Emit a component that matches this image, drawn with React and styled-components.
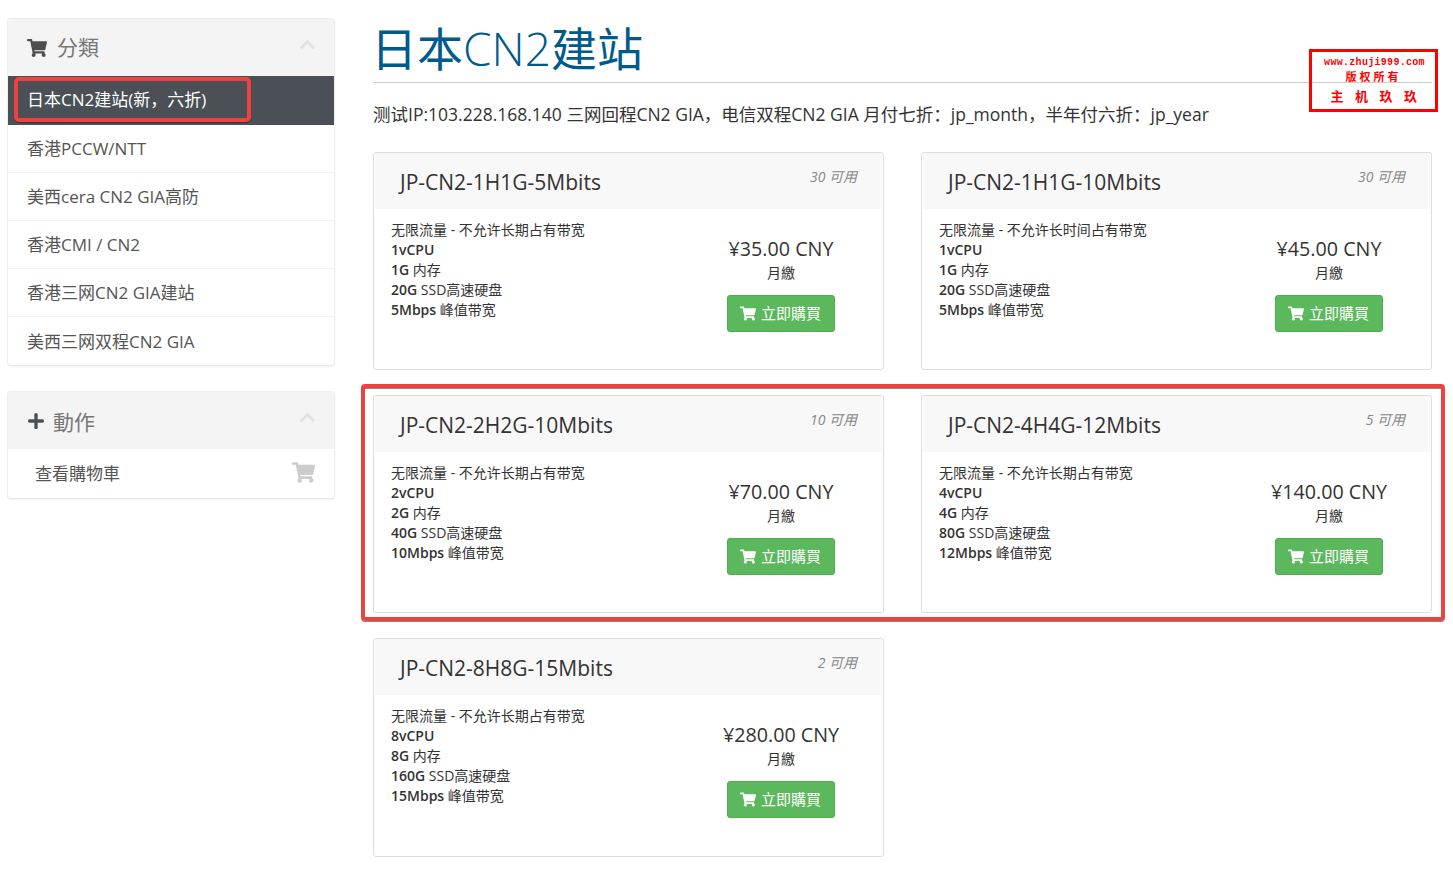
import React from "react";
import styled, { createGlobalStyle } from "styled-components";
import { FaPlus, FaChevronUp, FaShoppingCart } from "react-icons/fa";

const SANS = `"Open Sans", "Noto Sans CJK SC", sans-serif`;

const products = [
  { name: "JP-CN2-1H1G-5Mbits", qty: "30 可用", desc: "无限流量 - 不允许长期占有带宽", cpu: "1vCPU", ram: "1G", disk: "20G", band: "5Mbps", price: "¥35.00 CNY" },
  { name: "JP-CN2-1H1G-10Mbits", qty: "30 可用", desc: "无限流量 - 不允许长时间占有带宽", cpu: "1vCPU", ram: "1G", disk: "20G", band: "5Mbps", price: "¥45.00 CNY" },
  { name: "JP-CN2-2H2G-10Mbits", qty: "10 可用", desc: "无限流量 - 不允许长期占有带宽", cpu: "2vCPU", ram: "2G", disk: "40G", band: "10Mbps", price: "¥70.00 CNY" },
  { name: "JP-CN2-4H4G-12Mbits", qty: "5 可用", desc: "无限流量 - 不允许长期占有带宽", cpu: "4vCPU", ram: "4G", disk: "80G", band: "12Mbps", price: "¥140.00 CNY" },
  { name: "JP-CN2-8H8G-15Mbits", qty: "2 可用", desc: "无限流量 - 不允许长期占有带宽", cpu: "8vCPU", ram: "8G", disk: "160G", band: "15Mbps", price: "¥280.00 CNY" },
];

const categories = ["香港PCCW/NTT", "美西cera CN2 GIA高防", "香港CMI / CN2", "香港三网CN2 GIA建站", "美西三网双程CN2 GIA"];

function App() {
  return (
    <Page>
      <GlobalStyle />
      <Sidebar>
        <Panel>
          <PanelHead>
            <HeadIcon $size={20} $gap={10}><FaShoppingCart /></HeadIcon>
            <HeadTitle $lift={4}>分類</HeadTitle>
            <Collapse><FaChevronUp /></Collapse>
          </PanelHead>
          <ActiveItem>
            日本CN2建站(新，六折)
            <ActiveMark />
          </ActiveItem>
          {categories.map((c) => (
            <MenuItem key={c}>{c}</MenuItem>
          ))}
        </Panel>
        <Panel>
          <PanelHead>
            <HeadIcon $size={18} $gap={8}><FaPlus /></HeadIcon>
            <HeadTitle>動作</HeadTitle>
            <Collapse><FaChevronUp /></Collapse>
          </PanelHead>
          <ActionItem>
            查看購物車
            <ActionIcon><FaShoppingCart /></ActionIcon>
          </ActionItem>
        </Panel>
      </Sidebar>
      <Main>
        <Title>日本<TitleLatin>CN2</TitleLatin>建站</Title>
        <Stamp>
          <StampUrl>www.zhuji999.com</StampUrl>
          <StampLine>版权所有</StampLine>
          <StampName>主机玖玖</StampName>
        </Stamp>
        <Intro>测试IP:103.228.168.140 三网回程CN2 GIA，电信双程CN2 GIA 月付七折：jp_month，半年付六折：jp_year</Intro>
        <Cards>
          <RowMark />
          {products.map((p) => (
            <Card key={p.name}>
              <CardHead>
                <CardName>{p.name}</CardName>
                <Qty>{p.qty}</Qty>
              </CardHead>
              <CardBody>
                <Specs>
                  <div>{p.desc}</div>
                  <div><b>{p.cpu}</b></div>
                  <div><b>{p.ram}</b> 内存</div>
                  <div><b>{p.disk}</b> SSD高速硬盘</div>
                  <div><b>{p.band}</b> 峰值带宽</div>
                </Specs>
                <Pricing>
                  <Price>{p.price}</Price>
                  <Cycle>月繳</Cycle>
                  <BuyButton><FaShoppingCart />立即購買</BuyButton>
                </Pricing>
              </CardBody>
            </Card>
          ))}
        </Cards>
      </Main>
    </Page>
  );
}

const GlobalStyle = createGlobalStyle`
  html, body {
    margin: 0;
    background: #fff;
    font-family: ${SANS};
    color: #333;
  }
  * {
    box-sizing: border-box;
  }
`;

const Page = styled.div`
  display: flex;
  align-items: flex-start;
  gap: 38px;
  width: 1453px;
  height: 871px;
  overflow: hidden;
  padding: 18px 21px 0 7px;
`;

const Sidebar = styled.div`
  flex: 0 0 328px;
  display: flex;
  flex-direction: column;
  gap: 25px;
`;

const Panel = styled.div`
  border: 1px solid #eee;
  border-bottom-color: #e8e8e8;
  border-radius: 4px;
  background: #fff;
  box-shadow: 0 1px 2px rgba(0, 0, 0, 0.06);
`;

const PanelHead = styled.div`
  display: flex;
  align-items: center;
  height: 57px;
  padding: 0 18px 0 19px;
  background: #f4f4f4;
  border-radius: 3px 3px 0 0;
`;

const HeadIcon = styled.span`
  display: flex;
  font-size: ${(p) => p.$size}px;
  color: #4a4f54;
  margin-right: ${(p) => p.$gap}px;
`;

const HeadTitle = styled.span`
  flex: 1;
  margin-bottom: ${(p) => p.$lift || 0}px;
  font-size: 21px;
  color: #777;
`;

const Collapse = styled.span`
  display: flex;
  margin-bottom: 6px;
  font-size: 17px;
  color: #e2e2e2;
`;

const ActiveItem = styled.div`
  position: relative;
  display: flex;
  align-items: center;
  height: 49px;
  padding: 0 19px 4px;
  font-size: 17px;
  color: #fff;
  background: #4a5056;
`;

const ActiveMark = styled.span`
  position: absolute;
  left: 6px;
  top: 1px;
  width: 237px;
  height: 45px;
  border: 4px solid #f04040;
  border-radius: 5px;
  box-shadow: 0 1px 1px #333;
`;

const MenuItem = styled.div`
  display: flex;
  align-items: center;
  height: 48px;
  padding: 0 19px 2px;
  font-size: 17px;
  color: #555;
  border-top: 1px solid #f2f2f2;

  &:nth-child(3) {
    height: 47px;
    border-top: 0;
  }

  &:last-child {
    height: 49px;
  }
`;

const ActionItem = styled.div`
  display: flex;
  align-items: center;
  justify-content: space-between;
  height: 49px;
  padding: 0 19px 2px 27px;
  font-size: 17px;
  color: #555;
`;

const ActionIcon = styled.span`
  display: flex;
  font-size: 23px;
  color: #ccc;
`;

const Main = styled.div`
  position: relative;
  flex: 1;
  min-width: 0;
`;

const Title = styled.h1`
  margin: 0;
  height: 65px;
  font-size: 46px;
  line-height: 60px;
  font-weight: 400;
  color: #005a8c;
  text-indent: -2px;
  border-bottom: 1px solid #ccc;
`;

const TitleLatin = styled.span`
  font-weight: 350;
`;

const Stamp = styled.div`
  position: absolute;
  top: 31px;
  left: 936px;
  display: flex;
  flex-direction: column;
  align-items: center;
  width: 129px;
  height: 63px;
  padding-top: 5px;
  border: 3px solid #f00;
  color: #f00;
  font-weight: 700;
`;

const StampUrl = styled.div`
  font-family: "Liberation Mono", monospace;
  font-size: 10px;
  line-height: 11px;
  letter-spacing: 0.3px;
  margin-left: 2px;
`;

const StampLine = styled.div`
  font-family: "Noto Sans CJK SC", sans-serif;
  font-size: 11px;
  line-height: 16px;
  letter-spacing: 3px;
`;

const StampName = styled.div`
  font-family: "Noto Sans CJK SC", sans-serif;
  font-size: 13px;
  line-height: 20px;
  letter-spacing: 11.5px;
  margin: 2px -12px 0 0;
`;

const Intro = styled.p`
  margin: 19px 0 25px;
  font-size: 17.5px;
  line-height: 25px;
  color: #333;
  white-space: nowrap;
`;

const Cards = styled.div`
  position: relative;
  display: grid;
  grid-template-columns: 511px 511px;
  grid-template-rows: 218px 218px 219px;
  column-gap: 37px;
  row-gap: 25px;
`;

const RowMark = styled.div`
  position: absolute;
  left: -12px;
  top: 232px;
  width: 1084px;
  height: 237px;
  border: 4px solid #f04040;
  border-radius: 4px;
  box-shadow: 0 1px 0 #888, inset 0 1px 0 #888;
  pointer-events: none;
`;

const Card = styled.div`
  display: flex;
  flex-direction: column;
  border: 1px solid #ddd;
  border-radius: 3px;
  padding: 0 1px;
  background: #fff;
`;

const CardHead = styled.div`
  display: flex;
  justify-content: space-between;
  height: 56px;
  padding: 14px 25px 0 25px;
  background: #f8f8f8;
`;

const CardName = styled.div`
  font-size: 21px;
  line-height: 30px;
  color: #333;
`;

const Qty = styled.div`
  margin-top: 1px;
  font-size: 14px;
  line-height: 18px;
  font-style: italic;
  color: #888;
`;

const CardBody = styled.div`
  display: flex;
  justify-content: space-between;
  padding: 11px 0 0 16px;
`;

const Specs = styled.div`
  font-size: 14px;
  line-height: 20px;
  color: #333;

  b {
    font-weight: 600;
  }
`;

const Pricing = styled.div`
  flex: 0 0 202px;
  display: flex;
  flex-direction: column;
  align-items: center;
  padding-top: 15px;
`;

const Price = styled.div`
  font-size: 19.7px;
  line-height: 28px;
`;

const Cycle = styled.div`
  font-size: 14px;
  line-height: 20px;
`;

const BuyButton = styled.button`
  display: flex;
  align-items: center;
  justify-content: center;
  gap: 5px;
  width: 108px;
  height: 37px;
  margin-top: 12px;
  border: 1px solid #4cae4c;
  border-radius: 3px;
  background: #5cb85c;
  color: #fff;
  font-family: inherit;
  font-size: 15px;
  padding: 0 1px 2px 0;

  svg {
    width: 16px;
    height: 15px;
    margin-top: 2px;
  }
`;

export default App;
